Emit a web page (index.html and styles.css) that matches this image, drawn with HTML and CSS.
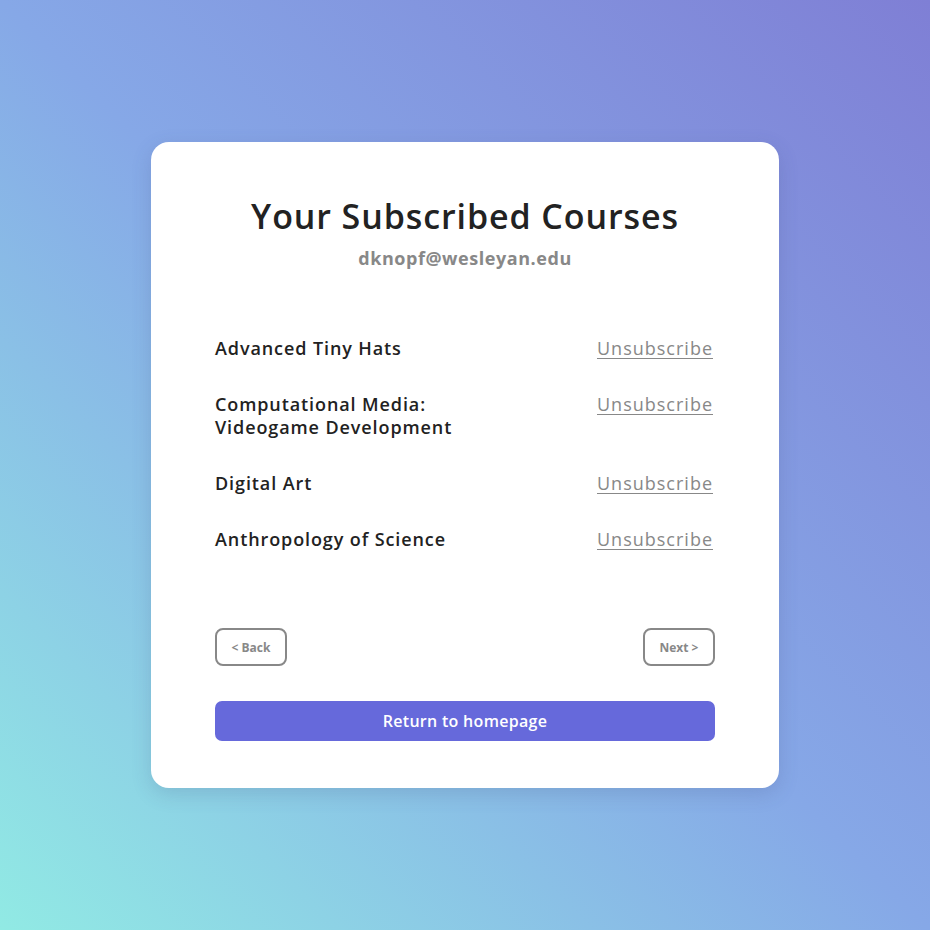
FILE: index.html
```html
<!DOCTYPE html>
<html lang="en">
<head>
<meta charset="utf-8">
<title>Your Subscribed Courses</title>
<link rel="stylesheet" href="styles.css">
</head>
<body>
<main class="page">
  <section class="card">
    <header class="card-head">
      <h1 class="title">Your Subscribed Courses</h1>
      <p class="email">dknopf@wesleyan.edu</p>
    </header>
    <ul class="courses">
      <li class="course"><span class="course-name">Advanced Tiny Hats</span><a class="unsub" href="#">Unsubscribe</a></li>
      <li class="course"><span class="course-name">Computational Media:<br>Videogame Development</span><a class="unsub" href="#">Unsubscribe</a></li>
      <li class="course"><span class="course-name">Digital Art</span><a class="unsub" href="#">Unsubscribe</a></li>
      <li class="course"><span class="course-name">Anthropology of Science</span><a class="unsub" href="#">Unsubscribe</a></li>
    </ul>
    <nav class="pager">
      <button class="pager-btn" type="button">&lt; Back</button>
      <button class="pager-btn" type="button">Next &gt;</button>
    </nav>
    <button class="home-btn" type="button">Return to homepage</button>
  </section>
</main>
</body>
</html>
```
FILE: styles.css
```css
* { box-sizing: border-box; }
html, body { margin: 0; padding: 0; }
body {
  font-family: "Open Sans", "Noto Sans", sans-serif;
  background: linear-gradient(45deg, #91eae4 0%, #86a8e7 50%, #7f7fd5 100%);
  min-height: 930px;
}
.page {
  min-height: 930px;
  display: flex;
  justify-content: center;
  align-items: flex-start;
  padding-top: 142px;
}
.card {
  width: 628px;
  background: #fff;
  border-radius: 18px;
  box-shadow: 0 6px 20px rgba(60, 70, 120, 0.18);
  padding: 53px 64px 47px;
  display: flex;
  flex-direction: column;
}
.card-head { text-align: center; }
.title {
  margin: 0;
  font-size: 34px;
  font-weight: 600;
  letter-spacing: 0.9px;
  color: #222;
  line-height: 42px;
}
.email {
  margin: 0;
  margin-top: 8px;
  font-size: 18px;
  font-weight: 700;
  color: #888;
  line-height: 26px;
  letter-spacing: 0.55px;
}
.courses {
  list-style: none;
  margin: 66px 0 0;
  padding: 0;
  display: flex;
  flex-direction: column;
  gap: 33px;
}
.course {
  display: flex;
  justify-content: space-between;
  align-items: flex-start;
}
.course-name {
  font-size: 18px;
  font-weight: 600;
  color: #222;
  line-height: 23px;
  letter-spacing: 0.9px;
}
.unsub {
  font-size: 18px;
  color: #888;
  line-height: 23px;
  letter-spacing: 1px;
  margin-right: 2px;
  text-decoration: underline;
  text-underline-offset: 3px;
}
.pager {
  display: flex;
  justify-content: space-between;
  margin-top: 77px;
}
.pager-btn {
  width: 72px;
  height: 38px;
  border: 2px solid #888;
  border-radius: 8px;
  background: #fff;
  color: #888;
  font-family: inherit;
  font-size: 12px;
  font-weight: 700;
  padding: 0;
}
.home-btn {
  margin-top: 35px;
  height: 40px;
  width: 100%;
  border: none;
  border-radius: 7px;
  background: #6669db;
  color: #fff;
  font-family: inherit;
  font-size: 16px;
  font-weight: 600;
  letter-spacing: 0.3px;
}
```
